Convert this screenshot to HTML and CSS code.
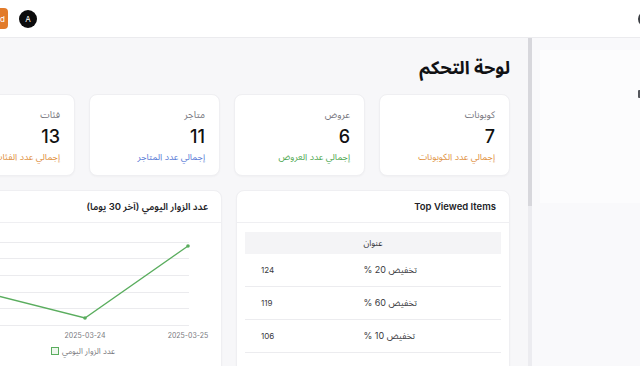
FILE: index.html
```html
<!DOCTYPE html>
<html lang="ar" dir="rtl">
<head>
<meta charset="utf-8">
<title>لوحة التحكم</title>
<link rel="stylesheet" href="styles.css">
</head>
<body>
<div class="app">
  <header class="topbar">
    <div class="brand"><span class="brand-icon"></span></div>
    <div class="actions">
      <span class="avatar">A</span>
      <button class="btn-add">Add</button>
    </div>
  </header>
  <div class="layout">
    <aside class="sidebar">
      <div class="side-inner">
        <div class="side-group open">
          <div class="side-head">
            <svg class="chev" viewBox="0 0 8 5" width="8" height="5"><polyline points="1,4.2 4,1.2 7,4.2" fill="none" stroke="#a5a5ad" stroke-width="1"/></svg>
          </div>
          <div class="side-item"><span class="side-icon"></span></div>
        </div>
        <div class="side-group">
          <div class="side-head">
            <svg class="chev" viewBox="0 0 8 5" width="8" height="5"><polyline points="1,4.2 4,1.2 7,4.2" fill="none" stroke="#a5a5ad" stroke-width="1"/></svg>
          </div>
        </div>
      </div>
      <div class="scroll-track"><div class="scroll-thumb"></div></div>
    </aside>
    <main class="main">
      <div class="content">
        <h1 class="page-title">لوحة التحكم</h1>
        <div class="stats">
          <div class="card stat">
            <div class="stat-label">كوبونات</div>
            <div class="stat-value">7</div>
            <div class="stat-sub orange">إجمالي عدد الكوبونات</div>
          </div>
          <div class="card stat">
            <div class="stat-label">عروض</div>
            <div class="stat-value">6</div>
            <div class="stat-sub green">إجمالي عدد العروض</div>
          </div>
          <div class="card stat">
            <div class="stat-label">متاجر</div>
            <div class="stat-value">11</div>
            <div class="stat-sub blue">إجمالي عدد المتاجر</div>
          </div>
          <div class="card stat">
            <div class="stat-label">فئات</div>
            <div class="stat-value">13</div>
            <div class="stat-sub orange">إجمالي عدد الفئات</div>
          </div>
        </div>
        <div class="panels">
          <section class="card panel">
            <div class="panel-head">Top Viewed Items</div>
            <div class="panel-body table-wrap">
              <table class="items">
                <thead>
                  <tr><th class="c-title">عنوان</th><th class="c-views"></th></tr>
                </thead>
                <tbody>
                  <tr><td class="c-title">تخفيض 20 %</td><td class="c-views">124</td></tr>
                  <tr><td class="c-title">تخفيض 60 %</td><td class="c-views">119</td></tr>
                  <tr><td class="c-title">تخفيض 10 %</td><td class="c-views">106</td></tr>
                </tbody>
              </table>
            </div>
          </section>
          <section class="card panel">
            <div class="panel-head">عدد الزوار اليومي (آخر 30 يوما)</div>
            <div class="chart">
              <svg class="chart-svg" viewBox="0 0 276 115" width="276" height="115">
                <g stroke="#ebebee" stroke-width="1">
                  <line x1="20" y1="19.5" x2="244" y2="19.5"/>
                  <line x1="20" y1="35.5" x2="244" y2="35.5"/>
                  <line x1="20" y1="52.5" x2="244" y2="52.5"/>
                  <line x1="20" y1="69.5" x2="244" y2="69.5"/>
                  <line x1="20" y1="85.5" x2="244" y2="85.5"/>
                  <line x1="20" y1="102.5" x2="244" y2="102.5"/>
                </g>
                <polyline points="37,69 140,95 243,23" fill="none" stroke="#5aad5e" stroke-width="1.3"/>
                <circle cx="140" cy="95" r="1.8" fill="#5aad5e"/>
                <circle cx="243" cy="23" r="1.8" fill="#5aad5e"/>
                <g class="axis-label" text-anchor="middle">
                  <text x="140" y="114.5" direction="ltr">2025-03-24</text>
                  <text x="243" y="114.5" direction="ltr">2025-03-25</text>
                </g>
              </svg>
              <div class="legend">
                <span class="legend-text">عدد الزوار اليومي</span>
                <span class="legend-box"></span>
              </div>
            </div>
          </section>
        </div>
      </div>
    </main>
  </div>
</div>
</body>
</html>
```

FILE: styles.css
```css
html, body {
  margin: 0;
  padding: 0;
  overflow: hidden;
  height: 100%;
}
body {
  font-family: "Inter", "Noto Sans Arabic", "DejaVu Sans", sans-serif;
  color: #1b1b1f;
  background: #f7f7f9;
}
.app {
  width: 680px;
  margin-right: -40px;
  height: 366px;
}
.topbar {
  height: 37px;
  background: #ffffff;
  border-bottom: 1px solid #ebebee;
  display: flex;
  align-items: center;
  justify-content: space-between;
  padding-right: 26px;
  box-sizing: content-box;
}
.brand { display: flex; align-items: center; }
.brand-icon {
  width: 16px;
  height: 16px;
  border-radius: 50%;
  background: #3a3d42;
  display: block;
}
.actions {
  display: flex;
  align-items: center;
  gap: 11px;
  margin-left: -14px;
}
.avatar {
  width: 18px;
  height: 18px;
  border-radius: 50%;
  background: #0b0b0c;
  color: #fff;
  font-size: 8px;
  display: flex;
  align-items: center;
  justify-content: center;
  line-height: 1;
}
.btn-add {
  width: 22px;
  height: 21px;
  border: 0;
  border-radius: 4px;
  background: #e27b2a;
  color: #fff;
  font-family: inherit;
  font-size: 8px;
  padding: 0 3px 0 0;
  text-align: right;
  direction: ltr;
  overflow: hidden;
  white-space: nowrap;
}
.layout {
  display: flex;
  height: 328px;
}
.sidebar {
  width: 152px;
  flex: none;
  display: flex;
  background: #f9f9fb;
}
.side-inner {
  flex: 1;
  padding: 12px 0 0 8px;
}
.side-group {
  margin-bottom: 14px;
}
.side-group.open {
  background: #fcfcfd;
  height: 153px;
}
.side-head {
  height: 32px;
  display: flex;
  align-items: center;
  padding-left: 7px;
}
.chev { display: block; }
.side-item {
  height: 24px;
  display: flex;
  align-items: center;
  padding-right: 30px;
}
.side-icon {
  width: 12px;
  height: 8px;
  background: #55575c;
  border-radius: 1px;
  display: block;
}
.scroll-track {
  width: 4px;
  background: #ececf0;
  flex: none;
}
.scroll-thumb {
  height: 168px;
  background: #d7d7dc;
}
.main {
  flex: 1;
  overflow: hidden;
  padding-right: 18px;
}
.content {
  width: 566px;
  flex: none;
}
.page-title {
  margin: 0;
  padding-top: 16px;
  font-size: 18px;
  line-height: 28px;
  font-weight: 700;
  color: #111114;
  height: 28px;
}
.stats {
  margin-top: 12px;
  display: grid;
  grid-template-columns: repeat(4, 1fr);
  gap: 14px;
}
.card {
  background: #ffffff;
  border: 1px solid #efeff2;
  border-radius: 8px;
  box-shadow: 0 1px 2px rgba(20, 20, 40, 0.03);
  box-sizing: border-box;
}
.stat {
  height: 82px;
  padding: 13px 14px 0;
}
.stat-label {
  font-size: 9.5px;
  line-height: 14px;
  color: #76767e;
}
.stat-value {
  margin-top: 4px;
  font-size: 18px;
  line-height: 22px;
  font-weight: 500;
  color: #111;
}
.stat-sub {
  margin-top: 2px;
  font-size: 9px;
  line-height: 14px;
}
.orange { color: #e0913f; }
.green { color: #4fa852; }
.blue { color: #5a7bd6; }
.panels {
  margin-top: 14px;
  display: grid;
  grid-template-columns: 1fr 1fr;
  gap: 14px;
}
.panel {
  height: 200px;
}
.panel-head {
  height: 32px;
  box-sizing: border-box;
  border-bottom: 1px solid #efeff2;
  display: flex;
  align-items: center;
  padding: 0 13px;
  font-size: 9.5px;
  font-weight: 600;
  color: #222226;
}
.table-wrap {
  padding: 9px 8px 0;
}
.items {
  width: 100%;
  border-collapse: collapse;
  font-size: 9px;
  color: #3a3a40;
}
.items th, .items td {
  text-align: left;
  padding: 0 16px;
}
.items th {
  height: 22px;
  background: #f4f4f6;
  font-weight: 400;
  font-size: 8.5px;
  color: #333338;
}
.items td {
  height: 32px;
  border-bottom: 1px solid #ececef;
}
.items td.c-views {
  font-size: 8px;
}
.c-title { width: 60%; }
.chart-svg {
  display: block;
}
.axis-label {
  font-size: 7px;
  fill: #7a7a80;
  font-family: "Inter", sans-serif;
}
.legend {
  display: flex;
  justify-content: center;
  align-items: center;
  gap: 3px;
  height: 26px;
}
.legend-text {
  font-size: 8px;
  color: #7a7a80;
}
.legend-box {
  width: 6px;
  height: 6px;
  border: 1.5px solid #5aad5e;
  background: #eef7ee;
  display: block;
}
```
